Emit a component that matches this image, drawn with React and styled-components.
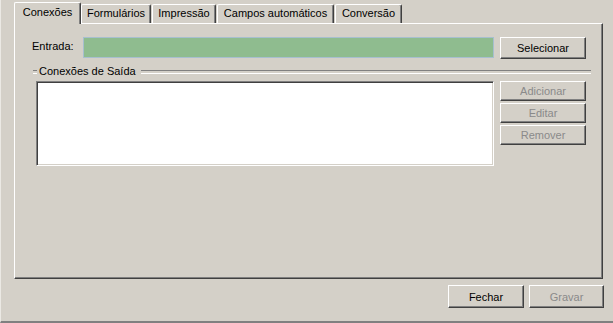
import React from 'react';
import styled, { createGlobalStyle } from 'styled-components';

const GlobalStyle = createGlobalStyle`
    html, body {
        margin: 0;
        padding: 0;
        background: #d4d0c8;
    }
    * {
        box-sizing: border-box;
    }
`;

const Window = styled.div`
    width: 613px;
    height: 323px;
    background: #d4d0c8;
    border-left: 1px solid #ebe9e4;
    border-bottom: 2px solid #808080;
    padding: 2px 10px 0 13px;
    display: flex;
    flex-direction: column;
    font-family: "Liberation Sans", Arial, sans-serif;
    font-size: 11px;
    color: #000;
`;

const TabStrip = styled.div`
    display: flex;
    align-items: flex-end;
    height: 21px;
    position: relative;
    z-index: 1;
`;

const Tab = styled.div`
    width: ${(p) => p.$width}px;
    height: ${(p) => (p.$active ? 22 : 19)}px;
    margin-bottom: ${(p) => (p.$active ? -1 : 0)}px;
    margin-right: ${(p) => (p.$active ? 0 : 1)}px;
    padding-top: ${(p) => (p.$active ? 3 : 2)}px;
    display: flex;
    justify-content: center;
    background: #d4d0c8;
    border-top: 1px solid #fff;
    border-left: 1px solid #fff;
    border-right: 1px solid #404040;
    border-radius: 2px 2px 0 0;
    box-shadow: inset -1px 0 0 #808080;
    white-space: nowrap;
`;

const Panel = styled.div`
    height: 256px;
    border-top: 1px solid #fff;
    border-left: 1px solid #fff;
    border-right: 1px solid #404040;
    border-bottom: 1px solid #404040;
    box-shadow: inset -1px -1px 0 #808080;
    padding: 13px 16px 0 17px;
    display: flex;
    flex-direction: column;
`;

const InputRow = styled.div`
    display: flex;
    align-items: flex-start;
    gap: 6px;
`;

const Label = styled.span`
    width: 45px;
    height: 21px;
    line-height: 19px;
`;

const GreenField = styled.div`
    flex: 1;
    height: 21px;
    background: #8fbc8f;
    border: 1px solid #a7bfcf;
`;

const Button = styled.button`
    width: ${(p) => p.$width || 86}px;
    height: ${(p) => p.$height || 20}px;
    padding: 0;
    margin: 0;
    background: #d4d0c8;
    font-family: inherit;
    font-size: 11px;
    color: ${(p) => (p.disabled ? '#8a8a8a' : '#000')};
    border: 1px solid;
    border-color: #fff #404040 #404040 #fff;
    box-shadow: inset -1px -1px 0 #808080;
    flex-shrink: 0;
`;

const GroupHeader = styled.div`
    display: flex;
    align-items: center;
    height: 13px;
    margin: 6px -5px 0 1px;

    &::before,
    &::after {
        content: '';
        height: 2px;
        border-top: 1px solid #808080;
        border-bottom: 1px solid #fff;
    }
    &::before {
        width: 4px;
    }
    &::after {
        flex: 1;
    }
`;

const GroupLabel = styled.span`
    padding: 0 5px 0 2px;
    line-height: 13px;
`;

const ListRow = styled.div`
    display: flex;
    align-items: flex-start;
    gap: 6px;
    margin-top: 3px;
    padding-left: 4px;
`;

const ListBox = styled.div`
    flex: 1;
    height: 85px;
    background: #fff;
    border: 1px solid;
    border-color: #808080 #fff #fff #808080;
    box-shadow: inset 1px 1px 0 #404040, inset -1px -1px 0 #d4d0c8;
`;

const ButtonColumn = styled.div`
    display: flex;
    flex-direction: column;
    gap: 2px;
`;

const Footer = styled.div`
    display: flex;
    justify-content: flex-end;
    gap: 5px;
    margin: 6px -1px 0 0;
`;

const tabs = [
    { label: 'Conexões', width: 67, active: true },
    { label: 'Formulários', width: 70 },
    { label: 'Impressão', width: 64 },
    { label: 'Campos automáticos', width: 117 },
    { label: 'Conversão', width: 67 },
];

const App = () => {
    return (
        <>
            <GlobalStyle />
            <Window>
                <TabStrip>
                    {tabs.map((tab) => (
                        <Tab key={tab.label} $width={tab.width} $active={tab.active}>
                            {tab.label}
                        </Tab>
                    ))}
                </TabStrip>
                <Panel>
                    <InputRow>
                        <Label>Entrada:</Label>
                        <GreenField />
                        <Button $height={22}>Selecionar</Button>
                    </InputRow>
                    <GroupHeader>
                        <GroupLabel>Conexões de Saída</GroupLabel>
                    </GroupHeader>
                    <ListRow>
                        <ListBox />
                        <ButtonColumn>
                            <Button disabled>Adicionar</Button>
                            <Button disabled>Editar</Button>
                            <Button disabled>Remover</Button>
                        </ButtonColumn>
                    </ListRow>
                </Panel>
                <Footer>
                    <Button $width={76} $height={23}>Fechar</Button>
                    <Button $width={75} $height={23} disabled>Gravar</Button>
                </Footer>
            </Window>
        </>
    );
};

export default App;
